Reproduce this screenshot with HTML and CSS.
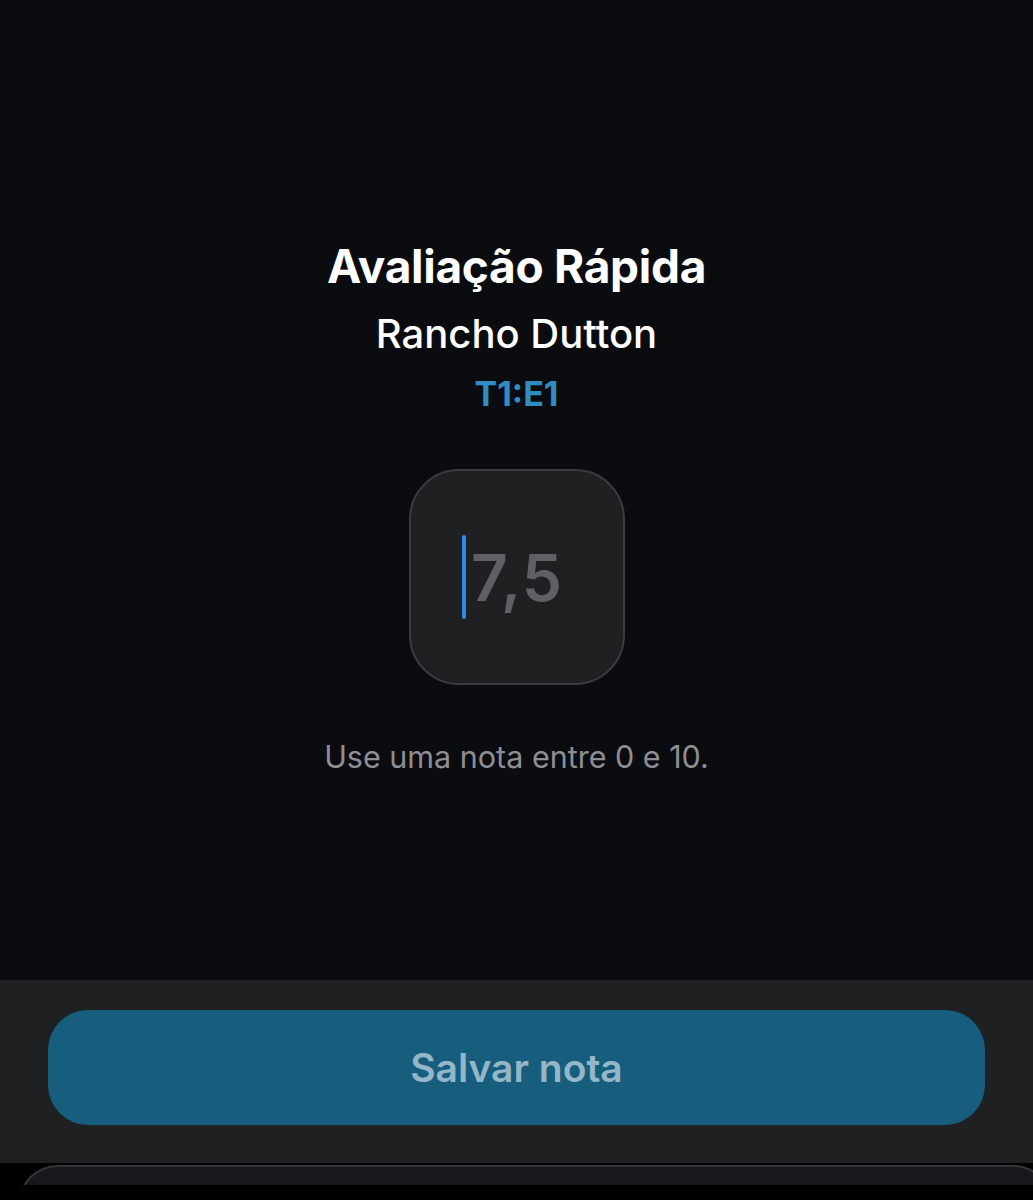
FILE: index.html
```html
<!DOCTYPE html>
<html lang="pt-BR">
<head>
    <meta charset="UTF-8">
    <meta name="viewport" content="width=device-width, initial-scale=1.0">
    <title>Avaliação Rápida</title>
    <link rel="stylesheet" href="styles.css">
</head>
<body>
    <div class="main-content">
        <h1 class="title">Avaliação Rápida</h1>
        <h2 class="show">Rancho Dutton</h2>
        <p class="episode">T1:E1</p>
        <div class="score-box">
            <span class="caret"></span>
            <span class="placeholder">7,5</span>
        </div>
        <p class="hint">Use uma nota entre 0 e 10.</p>
    </div>
    <div class="bottom-bar">
        <button class="save-btn">Salvar nota</button>
    </div>
    <div class="sheet-strip">
        <div class="sheet-card"></div>
    </div>
</body>
</html>
```

FILE: styles.css
```css
* {
    margin: 0;
    padding: 0;
    box-sizing: border-box;
}
body {
    background-color: #000;
    font-family: Inter, "Noto Sans", sans-serif;
    color: white;
    width: 1033px;
    height: 1200px;
    display: flex;
    flex-direction: column;
    overflow: hidden;
}
.main-content {
    height: 980px;
    flex-shrink: 0;
    background-color: #0b0c0f;
    display: flex;
    flex-direction: column;
    align-items: center;
    padding-top: 238px;
}
.title {
    font-size: 46px;
    font-weight: 700;
    line-height: 56px;
    letter-spacing: -0.3px;
}
.show {
    font-size: 40px;
    font-weight: 500;
    line-height: 46px;
    margin-top: 17px;
}
.episode {
    font-size: 34px;
    font-weight: 700;
    color: #2f8dc4;
    line-height: 40px;
    margin-top: 17px;
}
.score-box {
    width: 216px;
    height: 216px;
    margin-top: 55px;
    border-radius: 50px;
    background-color: #1f2022;
    border: 2px solid #3b3c3f;
    display: flex;
    align-items: center;
    justify-content: center;
    gap: 5px;
}
.caret {
    width: 4px;
    height: 84px;
    border-radius: 2px;
    background-color: #2d8cf0;
}
.placeholder {
    font-size: 64px;
    font-weight: 600;
    color: #5f6063;
    letter-spacing: 1px;
    margin-right: 8px;
}
.hint {
    font-size: 30.5px;
    color: #8e8e93;
    margin-top: 52px;
    line-height: 40px;
}
.bottom-bar {
    height: 183px;
    flex-shrink: 0;
    background-color: #1f2022;
    padding: 30px 48px 0;
}
.save-btn {
    width: 100%;
    height: 115px;
    border: none;
    border-radius: 40px;
    background-color: #175d7d;
    color: #93b7c7;
    font-family: Inter, "Noto Sans", sans-serif;
    font-size: 39px;
    font-weight: 600;
}
.sheet-strip {
    height: 22px;
    flex-shrink: 0;
    background-color: #000;
    padding: 2px 0 0 18px;
    overflow: hidden;
}
.sheet-card {
    height: 40px;
    margin-right: -20px;
    background-color: #17181b;
    border: 2px solid #35363a;
    border-radius: 40px 40px 0 0;
}
```
